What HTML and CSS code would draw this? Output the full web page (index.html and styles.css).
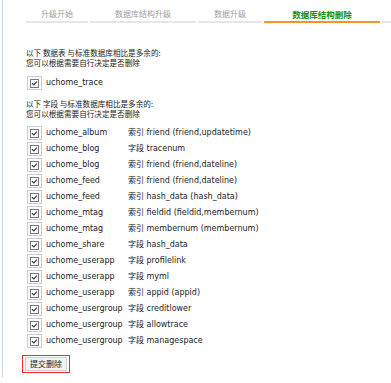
FILE: index.html
```html
<!DOCTYPE html>
<html lang="zh-CN">
<head>
<meta charset="utf-8">
<title>数据库结构删除</title>
<link rel="stylesheet" href="styles.css">
</head>
<body>
<div class="wrap">
  <div class="tabs">
    <div class="tab t1">升级开始</div>
    <div class="tab t2">数据库结构升级</div>
    <div class="tab t3">数据升级</div>
    <div class="tab t4 active">数据库结构删除</div>
    <div class="tab filler"></div>
  </div>

  <div class="content">
    <p class="intro first">以下 数据表 与标准数据库相比是多余的:<br>您可以根据需要自行决定是否删除</p>
    <div class="list single">
      <span class="cb"><svg viewBox="0 0 9 9" width="9" height="9"><rect x="0.5" y="0.5" width="8" height="8" fill="#fff" stroke="#7a7a7a"/><path d="M2 4.2 L3.8 6 L7 2.6" fill="none" stroke="#333" stroke-width="1.2"/></svg></span>
      <span class="name">uchome_trace</span>
      <span class="type"></span>
    </div>

    <p class="intro second">以下 字段 与标准数据库相比是多余的:<br>您可以根据需要自行决定是否删除</p>
    <div class="list" id="fields"></div>

    <div class="submit-box"><button class="submit" type="button">提交删除</button></div>
  </div>
</div>
<script>
var rows = [
  ["uchome_album","索引 friend (friend,updatetime)"],
  ["uchome_blog","字段 tracenum"],
  ["uchome_blog","索引 friend (friend,dateline)"],
  ["uchome_feed","索引 friend (friend,dateline)"],
  ["uchome_feed","索引 hash_data (hash_data)"],
  ["uchome_mtag","索引 fieldid (fieldid,membernum)"],
  ["uchome_mtag","索引 membernum (membernum)"],
  ["uchome_share","字段 hash_data"],
  ["uchome_userapp","字段 profilelink"],
  ["uchome_userapp","字段 myml"],
  ["uchome_userapp","索引 appid (appid)"],
  ["uchome_usergroup","字段 creditlower"],
  ["uchome_usergroup","字段 allowtrace"],
  ["uchome_usergroup","字段 managespace"]
];
var cb = '<span class="cb"><svg viewBox="0 0 9 9" width="9" height="9"><rect x="0.5" y="0.5" width="8" height="8" fill="#fff" stroke="#7a7a7a"/><path d="M2 4.2 L3.8 6 L7 2.6" fill="none" stroke="#333" stroke-width="1.2"/></svg></span>';
var html = "";
rows.forEach(function(r){
  html += cb + '<span class="name">' + r[0] + '</span><span class="type">' + r[1] + '</span>';
});
document.getElementById("fields").innerHTML = html;
</script>
</body>
</html>
```

FILE: styles.css
```css
html, body {
  margin: 0;
  padding: 0;
  background: #fff;
}
body {
  font-family: "DejaVu Sans", "Noto Sans CJK SC", sans-serif;
  font-size: 8px;
  color: #222;
}
.wrap {
  margin-left: 2px;
  border-left: 1px solid #c8d5e2;
  height: 377px;
  box-sizing: border-box;
}
.tabs {
  display: flex;
  padding-left: 23px;
  gap: 2px;
}
.tab {
  height: 23px;
  box-sizing: border-box;
  padding-top: 8px;
  line-height: 12px;
  text-align: center;
  color: #a0a0a0;
  border-bottom: 2px solid #e6e6e6;
  font-family: "Noto Sans CJK SC", sans-serif;
  font-size: 8px;
}
.t1 { width: 62px; }
.t2 { width: 106px; }
.t3 { width: 64px; }
.t4 { width: 116px; }
.filler { flex: 1; }
.tab.active {
  color: #129112;
  font-weight: bold;
  font-size: 8.5px;
  border-bottom-color: #f7931e;
}
.content {
  padding-left: 23px;
}
.intro {
  margin: 0;
  line-height: 10px;
  font-family: "Noto Sans CJK SC", sans-serif;
  font-size: 7.6px;
  color: #222;
}
.intro.first { margin-top: 25px; }
.intro.second { margin-top: 8px; }
.list {
  display: grid;
  grid-template-columns: 15px 78px auto;
  column-gap: 4px;
  grid-auto-rows: 16px;
  align-items: center;
  margin-left: 1px;
}
.list.single { margin-top: 7px; }
#fields { margin-top: 6px; }
.cb {
  width: 15px;
  height: 14px;
  box-sizing: border-box;
  border: 1px solid #c3ced9;
  background: #fbfcfd;
  display: flex;
  align-items: center;
  padding-left: 2px;
}
.cb svg { display: block; }
.name, .type {
  line-height: 12px;
  white-space: nowrap;
  color: #222;
}
.type { font-family: "DejaVu Sans", "Noto Sans CJK SC", sans-serif; }
.submit-box {
  margin-top: 6px;
  margin-left: -4px;
  width: 48px;
  height: 18px;
  box-sizing: border-box;
  border: 1px solid #ee2a2a;
  display: flex;
  align-items: center;
  justify-content: center;
}
.submit {
  width: 42px;
  height: 14px;
  padding: 0;
  border: 1px solid #d0d0d0;
  background: #f2f2f2;
  font-family: "Noto Sans CJK SC", sans-serif;
  font-size: 8px;
  color: #222;
  line-height: 12px;
}
```
